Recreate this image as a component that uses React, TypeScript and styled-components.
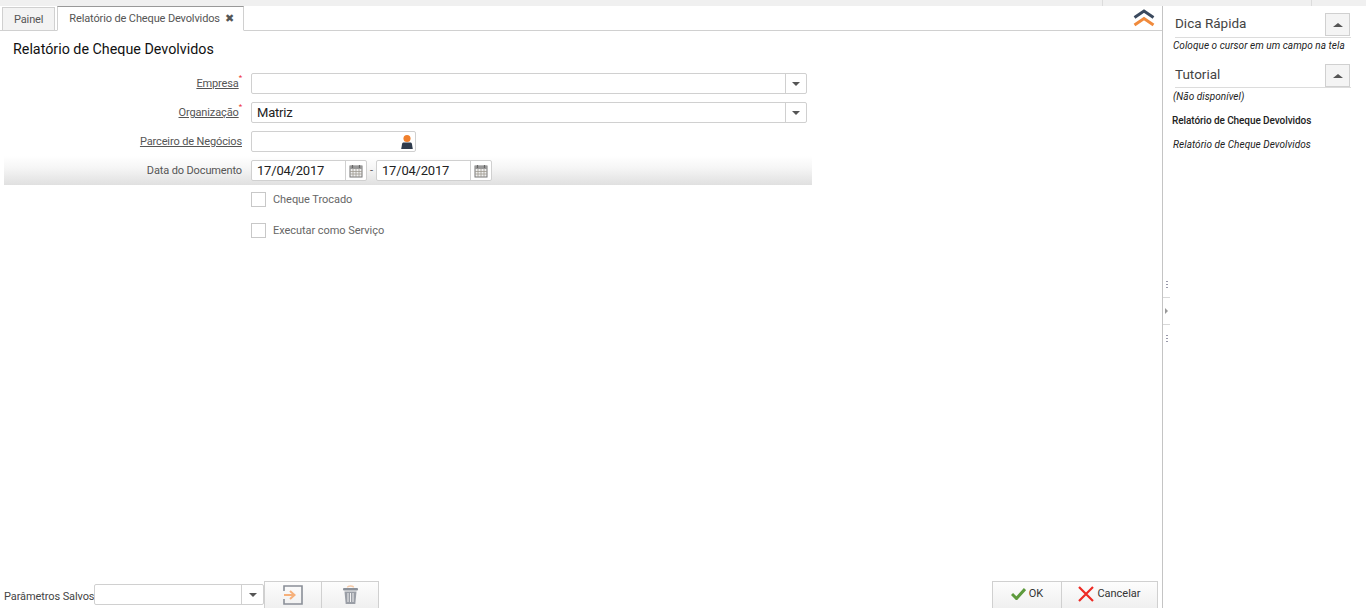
import React from 'react';
import styled, {createGlobalStyle} from 'styled-components';

const Global = createGlobalStyle`
  html, body {
    margin: 0;
    padding: 0;
    background: #fff;
    font-family: Roboto, "Liberation Sans", sans-serif;
    overflow: hidden;
  }
`;

const Page = styled.div`
  display: flex;
  flex-direction: column;
  height: 608px;
  width: 1366px;
`;
const TopStrip = styled.div`
  height: 6px;
  background: #f0f0f0;
  display: flex;
  justify-content: flex-end;
`;
const StripCell = styled.div<{$width: number}>`
  width: ${p => p.$width}px;
  border-left: 1px solid #dcdcdc;
  box-sizing: border-box;
`;
const Body = styled.div`
  flex: 1;
  display: flex;
  min-height: 0;
`;
const Main = styled.div`
  width: 1162px;
  border-right: 1px solid #c4c4c4;
  display: flex;
  flex-direction: column;
`;

const TabBar = styled.div`
  height: 25px;
  box-sizing: border-box;
  border-bottom: 1px solid #d0d0d0;
  display: flex;
  align-items: flex-end;
  padding-left: 2px;
  gap: 2px;
`;
const Tab = styled.div<{$active?: boolean}>`
  height: ${p => (p.$active ? 25 : 24)}px;
  margin-bottom: -1px;
  box-sizing: border-box;
  padding: 0 ${p => (p.$active ? 9 : 11)}px 0 11px;
  display: flex;
  align-items: center;
  gap: 5px;
  font-size: 11px;
  letter-spacing: -0.13px;
  color: #555;
  border: 1px solid #d0d0d0;
  border-top-color: ${p => (p.$active ? '#999' : '#d0d0d0')};
  border-bottom-color: ${p => (p.$active ? '#fff' : '#d0d0d0')};
  background: ${p => (p.$active ? '#fff' : '#f3f3f3')};
`;
const TabClose = styled.span`
  width: 9px;
  font-size: 11px;
  color: #555;
  line-height: 1;
`;
const CollapseIcon = styled.svg`
  margin: auto 7px 3px auto;
  display: block;
`;

const Title = styled.h1`
  margin: 10px 0 0 13px;
  height: 15px;
  overflow: hidden;
  font-size: 14.3px;
  line-height: 17px;
  font-weight: 400;
  color: #111;
`;

const Form = styled.div`
  flex: 1;
  padding: 13px 0 0 4px;
  width: 808px;
`;
const Row = styled.div<{$shaded?: boolean; $height?: number}>`
  height: ${p => p.$height || 29}px;
  display: grid;
  grid-template-columns: 247px 1fr;
  align-items: center;
  background: ${p =>
    p.$shaded ? 'linear-gradient(to bottom, #fff 0%, #f6f6f6 40%, #e0e0e0 100%)' : 'none'};
`;
const LabelCell = styled.div`
  display: flex;
  justify-content: flex-end;
  padding-right: 9px;
  font-size: 11px;
  letter-spacing: -0.13px;
  color: #555;
`;
const LinkLabel = styled.span`
  text-decoration: underline;
`;
const Required = styled.span`
  color: #e33;
  font-size: 8px;
  line-height: 8px;
  margin-top: -3px;
  height: 8px;
`;
const Field = styled.div<{$width: number}>`
  width: ${p => p.$width}px;
  height: 21px;
  box-sizing: border-box;
  border: 1px solid #d0d0d0;
  border-radius: 2px;
  display: flex;
  align-items: center;
  background: #fff;
`;
const FieldText = styled.div`
  flex: 1;
  padding-left: 5px;
  font-size: 13px;
  letter-spacing: -0.2px;
  color: #222;
`;
const FieldButton = styled.div<{$width?: number}>`
  width: ${p => p.$width || 20}px;
  height: 100%;
  border-left: 1px solid #d0d0d0;
  display: flex;
  align-items: center;
  justify-content: center;
`;
const Arrow = styled.div`
  width: 0;
  height: 0;
  border-left: 4px solid transparent;
  border-right: 4px solid transparent;
  border-top: 4px solid #555;
`;
const DateGroup = styled.div`
  display: flex;
  align-items: center;
`;
const Dash = styled.span`
  width: 9px;
  text-align: center;
  font-size: 11px;
  color: #555;
`;
const CheckLine = styled.div`
  display: flex;
  align-items: center;
  gap: 7px;
  font-size: 11px;
  letter-spacing: -0.05px;
  color: #666;
`;
const CheckBox = styled.div`
  width: 15px;
  height: 15px;
  box-sizing: border-box;
  border: 1px solid #c8c8c8;
`;

const Footer = styled.div`
  height: 27px;
  padding: 0 4px;
  display: flex;
  align-items: flex-end;
`;
const SavedLabel = styled.span`
  font-size: 11px;
  letter-spacing: -0.1px;
  color: #444;
  width: 90px;
  line-height: 23px;
  white-space: nowrap;
`;
const SavedSelect = styled(Field)`
  margin-bottom: 3px;
`;
const SelectText = styled.div`
  flex: 1;
`;
const ToolButton = styled.div<{$width: number; $raised?: boolean}>`
  width: ${p => p.$width}px;
  height: 27px;
  box-sizing: border-box;
  border: 1px solid #d0d0d0;
  border-bottom: none;
  padding-bottom: ${p => (p.$raised ? 3 : 0)}px;
  background: linear-gradient(to bottom, #fdfdfd, #f0f0f0);
  display: flex;
  align-items: center;
  justify-content: center;
  gap: 3px;
  font-size: 11px;
  color: #333;
  & + & {
    margin-left: -1px;
  }
`;
const Spacer = styled.div`
  flex: 1;
`;

const Side = styled.div`
  flex: 1;
  display: flex;
`;
const Rail = styled.div`
  width: 7px;
  display: flex;
  flex-direction: column;
  justify-content: center;
  padding-top: 8px;
`;
const RailCell = styled.div`
  height: 26px;
  display: flex;
  align-items: center;
  justify-content: center;
  border-bottom: 1px solid #d8d8d8;
  &:last-child {
    border-bottom: none;
  }
`;
const Grip = styled.div`
  width: 2px;
  height: 7px;
  background: repeating-linear-gradient(to bottom, #99a 0 1px, #fff 1px 3px);
`;
const RailArrow = styled.div`
  width: 0;
  height: 0;
  border-top: 3px solid transparent;
  border-bottom: 3px solid transparent;
  border-left: 3px solid #999;
`;
const SideContent = styled.div`
  flex: 1;
  padding: 7px 15px 0 3px;
`;
const SideHead = styled.div<{$height: number}>`
  height: ${p => p.$height}px;
  box-sizing: border-box;
  margin-left: 2px;
  display: flex;
  justify-content: space-between;
  border-bottom: 1px solid #dcdcdc;
  font-size: 13.5px;
  color: #444;
  line-height: 21px;
`;
const SideToggle = styled.div`
  width: 25px;
  height: 23px;
  margin-right: 1px;
  box-sizing: border-box;
  border: 1px solid #d0d0d0;
  background: #f4f4f4;
  display: flex;
  align-items: center;
  justify-content: center;
`;
const UpArrow = styled.div`
  width: 0;
  height: 0;
  border-left: 5px solid transparent;
  border-right: 5px solid transparent;
  border-bottom: 4px solid #555;
`;
const SideNotes = styled.div`
  padding-top: 1px;
`;
const SideNote = styled.div<{$height?: number}>`
  height: ${p => p.$height || 24}px;
  line-height: 16px;
  font-size: 10px;
  letter-spacing: 0.05px;
  font-style: italic;
  color: #222;
`;
const SideStrong = styled.div`
  height: 24px;
  margin-left: -1px;
  line-height: 16px;
  font-size: 10px;
  letter-spacing: -0.08px;
  font-weight: 500;
  color: #222;
`;

function ComboField({width, value}: {width: number; value?: string}) {
  return (
    <Field $width={width}>
      <FieldText>{value}</FieldText>
      <FieldButton>
        <Arrow />
      </FieldButton>
    </Field>
  );
}

function CalendarIcon() {
  return (
    <svg width="14" height="14" viewBox="0 0 14 14">
      <rect x="1" y="2" width="12" height="11" fill="#efefef" stroke="#777" />
      <rect x="1" y="2" width="12" height="3" fill="#999" />
      <path d="M3.5 1v3M10.5 1v3" stroke="#666" strokeWidth="1.2" />
      <path d="M1 7.5h12M1 10h12M4 5v8M7 5v8M10 5v8" stroke="#a09a90" strokeWidth="0.8" />
    </svg>
  );
}

function DateField({value}: {value: string}) {
  return (
    <Field $width={116}>
      <FieldText>{value}</FieldText>
      <FieldButton>
        <CalendarIcon />
      </FieldButton>
    </Field>
  );
}

function App() {
  return (
    <Page>
      <Global />
      <TopStrip>
        <StripCell $width={209} />
        <StripCell $width={55} />
      </TopStrip>
      <Body>
        <Main>
          <TabBar>
            <Tab>Painel</Tab>
            <Tab $active>
              Relatório de Cheque Devolvidos
              <TabClose>✖</TabClose>
            </Tab>
            <CollapseIcon width="22" height="20" viewBox="0 0 22 20">
              <path d="M1.500 10.500L11 4l9.500 6.500" fill="none" stroke="#3b4a5e" strokeWidth="3" />
              <path d="M1.500 18L11 11.500l9.500 6.500" fill="none" stroke="#f08a3c" strokeWidth="3" />
            </CollapseIcon>
          </TabBar>
          <Title>Relatório de Cheque Devolvidos</Title>
          <Form>
            <Row>
              <LabelCell>
                <LinkLabel>Empresa</LinkLabel>
                <Required>*</Required>
              </LabelCell>
              <ComboField width={556} />
            </Row>
            <Row>
              <LabelCell>
                <LinkLabel>Organização</LinkLabel>
                <Required>*</Required>
              </LabelCell>
              <ComboField width={556} value="Matriz" />
            </Row>
            <Row>
              <LabelCell>
                <LinkLabel>Parceiro de Negócios</LinkLabel>
              </LabelCell>
              <Field $width={165}>
                <FieldText />
                <svg width="16" height="16" viewBox="0 0 18 18">
                  <circle cx="9" cy="5" r="4" fill="#f07f2c" />
                  <path d="M2.500 17l1-6c.2-1 1-1.500 2-1.500h7c1 0 1.800.5 2 1.500l1 6z" fill="#2f3b4c" />
                </svg>
              </Field>
            </Row>
            <Row $shaded>
              <LabelCell>Data do Documento</LabelCell>
              <DateGroup>
                <DateField value="17/04/2017" />
                <Dash>-</Dash>
                <DateField value="17/04/2017" />
              </DateGroup>
            </Row>
            <Row>
              <div />
              <CheckLine>
                <CheckBox />
                Cheque Trocado
              </CheckLine>
            </Row>
            <Row $height={33}>
              <div />
              <CheckLine>
                <CheckBox />
                Executar como Serviço
              </CheckLine>
            </Row>
          </Form>
          <Footer>
            <SavedLabel>Parâmetros Salvos</SavedLabel>
            <SavedSelect $width={170}>
              <SelectText />
              <FieldButton $width={21}>
                <Arrow />
              </FieldButton>
            </SavedSelect>
            <ToolButton $width={58}>
              <svg width="20" height="20" viewBox="0 0 20 20">
                <path d="M1 6V1h18v18H1v-5" fill="none" stroke="#8a8f98" strokeWidth="1.6" />
                <path d="M1 10h9M7 6l4.500 4L7 14" fill="none" stroke="#f6b07a" strokeWidth="2" />
              </svg>
            </ToolButton>
            <ToolButton $width={58}>
              <svg width="17" height="20" viewBox="0 0 17 20">
                <path d="M5.500 2.500c0-2 6-2 6 0" fill="none" stroke="#f3c7a5" strokeWidth="1.4" />
                <rect x="1" y="3" width="15" height="2.500" rx="1" fill="#8a8f98" />
                <path d="M2.500 6.500h12l-1.200 12.500H3.700z" fill="#9a9ea6" />
                <path d="M6 8v9M8.500 8v9M11 8v9" stroke="#f2f2f2" strokeWidth="1" />
              </svg>
            </ToolButton>
            <Spacer />
            <ToolButton $width={70} $raised>
              <svg width="15" height="13" viewBox="0 0 15 13">
                <path d="M1 7l4.500 4.500L14 2" fill="none" stroke="#5d9a3c" strokeWidth="3" />
              </svg>
              OK
            </ToolButton>
            <ToolButton $width={97} $raised>
              <svg width="16" height="16" viewBox="0 0 16 16">
                <path d="M1 1l14 14M15 1L1 15" stroke="#ee2a24" strokeWidth="2.200" />
              </svg>
              Cancelar
            </ToolButton>
          </Footer>
        </Main>
        <Side>
          <Rail>
            <RailCell>
              <Grip />
            </RailCell>
            <RailCell>
              <RailArrow />
            </RailCell>
            <RailCell>
              <Grip />
            </RailCell>
          </Rail>
          <SideContent>
            <SideHead $height={25}>
              Dica Rápida
              <SideToggle>
                <UpArrow />
              </SideToggle>
            </SideHead>
            <SideNote $height={26}>Coloque o cursor em um campo na tela</SideNote>
            <SideHead $height={24}>
              Tutorial
              <SideToggle>
                <UpArrow />
              </SideToggle>
            </SideHead>
            <SideNotes>
              <SideNote>(Não disponível)</SideNote>
              <SideStrong>Relatório de Cheque Devolvidos</SideStrong>
              <SideNote>Relatório de Cheque Devolvidos</SideNote>
            </SideNotes>
          </SideContent>
        </Side>
      </Body>
    </Page>
  );
}

export default App;
